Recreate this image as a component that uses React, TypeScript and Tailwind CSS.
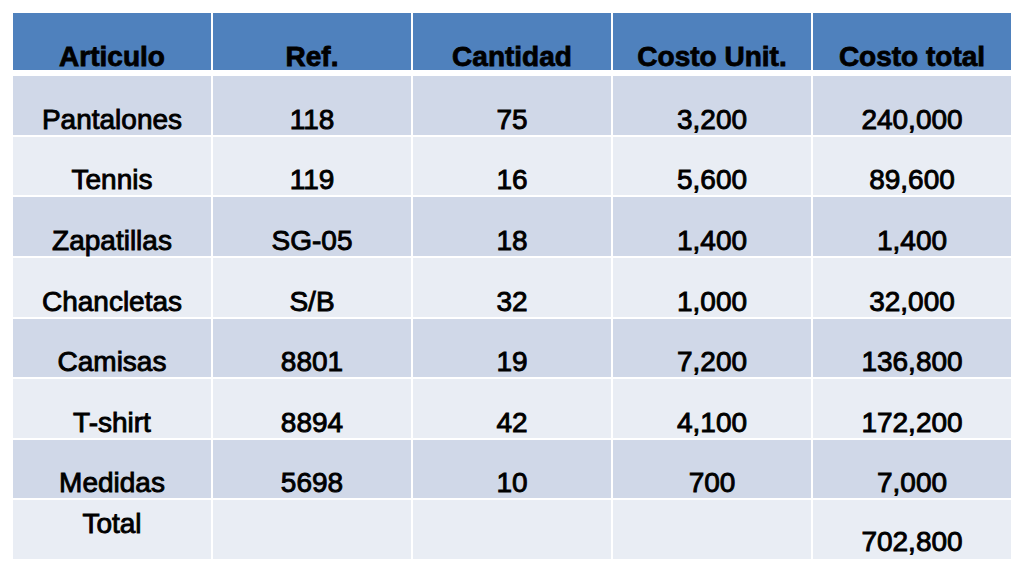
const headers = ['Articulo', 'Ref.', 'Cantidad', 'Costo Unit.', 'Costo total'];

const rows: string[][] = [
  ['Pantalones', '118', '75', '3,200', '240,000'],
  ['Tennis', '119', '16', '5,600', '89,600'],
  ['Zapatillas', 'SG-05', '18', '1,400', '1,400'],
  ['Chancletas', 'S/B', '32', '1,000', '32,000'],
  ['Camisas', '8801', '19', '7,200', '136,800'],
  ['T-shirt', '8894', '42', '4,100', '172,200'],
  ['Medidas', '5698', '10', '700', '7,000'],
];

export default function App() {
  return (
    <div className="w-[1024px] h-[572px] bg-white pt-[13px] pl-[13px] text-black font-['Liberation_Sans',Arial,sans-serif]">
      <div className="w-[998px]">
        {/* Header */}
        <div className="grid grid-cols-5 gap-x-[2px] h-[57px]">
          {headers.map((h) => (
            <div key={h} className="bg-[#4f81bd] flex items-end justify-center">
              <span className="text-[28px] leading-[26px] font-bold [-webkit-text-stroke:0.8px_black]">{h}</span>
            </div>
          ))}
        </div>

        {/* Body */}
        <div className="mt-[6px] grid grid-rows-[repeat(8,1fr)] gap-y-[2px] h-[483px]">
          {rows.map((r, i) => (
            <div key={r[0]} className="grid grid-cols-5 gap-x-[2px]">
              {r.map((cell, j) => (
                <div
                  key={j}
                  className={`flex items-end justify-center pb-[1px] ${i % 2 === 0 ? 'bg-[#d0d8e8]' : 'bg-[#e9edf4]'}`}
                >
                  <span className="text-[28px] leading-[28px] [-webkit-text-stroke:0.9px_black]">{cell}</span>
                </div>
              ))}
            </div>
          ))}

          {/* Total row */}
          <div className="grid grid-cols-5 gap-x-[2px]">
            <div className="bg-[#e9edf4] flex items-start justify-center pt-[10px]">
              <span className="text-[28px] leading-[28px] [-webkit-text-stroke:0.9px_black]">Total</span>
            </div>
            <div className="bg-[#e9edf4]" />
            <div className="bg-[#e9edf4]" />
            <div className="bg-[#e9edf4]" />
            <div className="bg-[#e9edf4] flex items-end justify-center pb-[3px]">
              <span className="text-[28px] leading-[28px] [-webkit-text-stroke:0.9px_black]">702,800</span>
            </div>
          </div>
        </div>
      </div>
    </div>
  );
}
